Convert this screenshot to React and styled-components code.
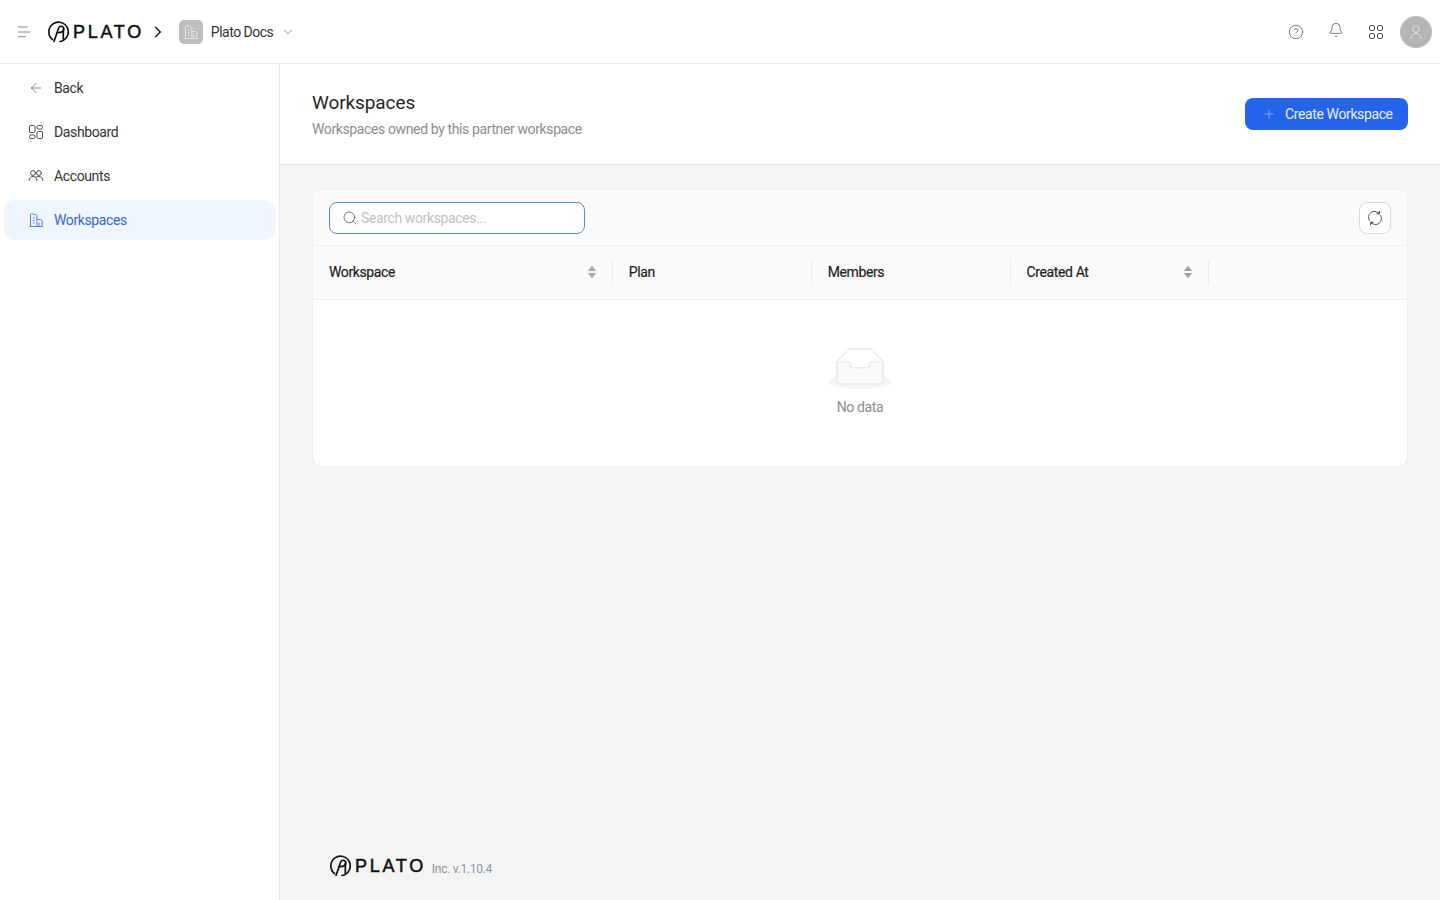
import React from 'react';
import styled, { createGlobalStyle } from 'styled-components';
import { ArrowLeft, Bell, ChevronDown, ChevronRight, CircleHelp, Plus, Search } from 'lucide-react';

const GlobalStyle = createGlobalStyle`
	html, body {
		margin: 0;
		padding: 0;
		height: 100%;
	}
	body {
		font-family: Roboto, "Noto Sans", sans-serif;
		font-size: 14px;
		letter-spacing: -0.38px;
		color: #262626;
		background: #fff;
	}
	* {
		box-sizing: border-box;
	}
`;

const Page = styled.div`
	width: 1440px;
	height: 900px;
	display: flex;
	flex-direction: column;
	overflow: hidden;
`;

const TopBar = styled.header`
	height: 64px;
	flex: none;
	display: flex;
	align-items: center;
	justify-content: space-between;
	padding: 0 8px 0 16px;
	background: #fff;
	border-bottom: 1px solid #e8e9ea;
`;

const TopLeft = styled.div`
	display: flex;
	align-items: center;
`;

const TopRight = styled.div`
	display: flex;
	align-items: center;
`;

const MenuButton = styled.span`
	display: flex;
	width: 16px;
	margin-right: 15px;
	color: #888;
`;

const LogoWrap = styled.div`
	display: flex;
	align-items: center;
	gap: 4px;
`;

const LogoWord = styled.span`
	font-family: "Liberation Sans", Arial, sans-serif;
	font-size: 18px;
	font-weight: 400;
	line-height: 1;
	letter-spacing: 2.7px;
	color: #111;
	-webkit-text-stroke: 0.5px #111;
`;

const Crumb = styled.span`
	display: flex;
	margin: 0 12px 0 5px;
	color: #222;
`;

const WorkspaceBadge = styled.span`
	width: 24px;
	height: 24px;
	border-radius: 5px;
	background: #bdbdbd;
	display: flex;
	align-items: center;
	justify-content: center;
	color: #e6e6e6;
	margin-right: 8px;
`;

const WorkspaceName = styled.span`
	font-size: 14px;
	letter-spacing: -0.5px;
	color: #333;
	margin-right: 8px;
`;

const TopIcon = styled.span`
	display: flex;
	justify-content: center;
	width: 40px;
	margin-top: ${(p) => p.$up || 0}px;
	color: #4d4d4d;
`;

const Avatar = styled.span`
	width: 32px;
	height: 32px;
	border-radius: 50%;
	background: #b5b5b5;
	display: flex;
	align-items: center;
	justify-content: center;
	color: #e4e4e4;
	margin-left: 4px;
`;

const Body = styled.div`
	flex: 1;
	display: flex;
	min-height: 0;
`;

const Sidebar = styled.nav`
	width: 280px;
	flex: none;
	padding: 4px 4px 0;
	background: #fff;
	border-right: 1px solid #e8e9ea;
	display: flex;
	flex-direction: column;
	gap: 4px;
`;

const NavItem = styled.div`
	width: 271px;
	height: 40px;
	display: flex;
	align-items: center;
	gap: 10px;
	padding-left: 24px;
	border-radius: 10px;
	font-size: 14px;
	background: ${(p) => (p.$active ? '#eff6ff' : 'transparent')};
	color: ${(p) => (p.$active ? '#3a66c4' : '#333')};
	svg {
		flex: none;
		color: ${(p) => (p.$active ? '#5a80d0' : '#4d4d4d')};
	}
`;

const Main = styled.main`
	flex: 1;
	min-width: 0;
	display: flex;
	flex-direction: column;
	background: #f4f4f5;
`;

const PageHeader = styled.div`
	height: 101px;
	flex: none;
	display: flex;
	align-items: flex-start;
	justify-content: space-between;
	padding: 25px 32px 0;
	background: #fff;
	border-bottom: 1px solid #e3e4e6;
`;

const Title = styled.h1`
	margin: 0;
	font-size: 19px;
	line-height: 28px;
	font-weight: 400;
	letter-spacing: -0.1px;
	color: #262626;
`;

const Subtitle = styled.p`
	margin: 2px 0 0;
	font-size: 14px;
	line-height: 20px;
	color: #8c8c8c;
`;

const PrimaryButton = styled.button`
	margin-top: 9px;
	width: 163px;
	height: 32px;
	display: flex;
	align-items: center;
	gap: 9px;
	padding: 0 0 0 17px;
	border: 0;
	border-radius: 8px;
	background: #2563eb;
	color: #e6efff;
	font: inherit;
	letter-spacing: inherit;
	font-size: 14px;
	svg {
		color: #a5c2f8;
	}
`;

const Content = styled.div`
	flex: 1;
	display: flex;
	flex-direction: column;
	justify-content: space-between;
	padding: 24px 32px 23px;
	min-height: 0;
`;

const Card = styled.section`
	height: 278px;
	background: #fff;
	border: 1px solid #eeeff0;
	border-radius: 10px;
	overflow: hidden;
`;

const Toolbar = styled.div`
	height: 56px;
	display: flex;
	align-items: center;
	justify-content: space-between;
	padding: 0 16px;
	background: #fafafa;
	border-bottom: 1px solid #f0f0f0;
`;

const SearchBox = styled.label`
	width: 256px;
	height: 32px;
	display: flex;
	align-items: center;
	gap: 2px;
	padding-left: 12px;
	background: #fff;
	border: 1px solid #5b8ac9;
	border-radius: 8px;
	color: #444;
`;

const SearchInput = styled.input`
	flex: 1;
	min-width: 0;
	padding: 0 0 0 1px;
	border: 0;
	outline: 0;
	background: transparent;
	font: inherit;
	letter-spacing: inherit;
	font-size: 14px;
	&::placeholder {
		color: #bfbfbf;
	}
`;

const IconButton = styled.button`
	width: 32px;
	height: 32px;
	padding: 0;
	display: flex;
	align-items: center;
	justify-content: center;
	background: #fff;
	border: 1px solid #d9d9d9;
	border-radius: 8px;
	color: #555;
`;

const HeadRow = styled.div`
	height: 54px;
	display: grid;
	grid-template-columns: 299.8px 198.9px 198.9px 198.4px 1fr;
	align-items: center;
	background: #fafafa;
	border-bottom: 1px solid #f0f0f0;
`;

const HeadCell = styled.div`
	position: relative;
	height: 100%;
	display: flex;
	align-items: center;
	justify-content: space-between;
	padding: 0 16px 1px;
	color: #1f1f1f;
	-webkit-text-stroke: 0.2px #1f1f1f;
	&::after {
		content: ${(p) => (p.$last ? 'none' : "''")};
		position: absolute;
		top: 14px;
		right: 0;
		bottom: 14px;
		width: 1px;
		background: #ececec;
	}
`;

const EmptyState = styled.div`
	display: flex;
	flex-direction: column;
	align-items: center;
	padding-top: 48px;
`;

const EmptyText = styled.div`
	margin-top: 8px;
	line-height: 20px;
	color: #8c8c8c;
`;

const Footer = styled.footer`
	display: flex;
	align-items: center;
	gap: 6px;
	padding-left: 17px;
`;

const Version = styled.span`
	font-size: 12px;
	letter-spacing: -0.3px;
	color: #8b93a7;
	margin-top: 6px;
`;

function HamburgerIcon() {
	return (
		<svg width="16" height="16" viewBox="0 0 16 16" fill="none" stroke="currentColor" strokeLinecap="round">
			<path d="M2.5 3h9M2.5 8h11.500M2.500 12.700h7" />
		</svg>
	);
}

function LogoMark({ size }) {
	return (
		<svg width={size} height={size} viewBox="0 0 22 22" fill="none" stroke="#111" strokeWidth="1.700" strokeLinecap="round">
			<path d="M5.500 18.500A9.700 9.700 0 1 1 13 20.500" />
			<path d="M7 20.500 11.500 7.500c.7-1.900 2.300-2.700 3.900-2 1.900.9 2 3.800.2 5-1.500 1-3.700 1.300-5.800 1.100" />
			<path d="M16.300 8v10" />
		</svg>
	);
}

function Logo({ size = 22 }) {
	return (
		<LogoWrap>
			<LogoMark size={size} />
			<LogoWord>PLATO</LogoWord>
		</LogoWrap>
	);
}

function BuildingIcon({ size = 16 }) {
	return (
		<svg width={size} height={size} viewBox="0 0 16 16" fill="none" stroke="currentColor" strokeWidth="1" strokeLinejoin="round">
			<path d="M1.500 14.500h13" />
			<path d="M2.500 14.500V2.600c0-.6.5-1 1.100-.9l4.400 1c.5.1.9.5.9 1v10.800" />
			<path d="M8.900 7.500h3.600c1 0 1.600.6 1.600 1.600v5.400" />
			<path d="M4.800 6h1.800M4.800 8.500h1.800M4.800 11h1.800M11 10.500v4" />
		</svg>
	);
}

function DashboardIcon() {
	return (
		<svg width="16" height="16" viewBox="0 0 16 16" fill="none" stroke="currentColor" strokeWidth="1">
			<rect x="1.500" y="1.500" width="5.500" height="7" rx="1.500" />
			<rect x="1.500" y="11" width="5.500" height="3.500" rx="1.500" />
			<rect x="9" y="1.500" width="5.500" height="3.500" rx="1.500" />
			<rect x="9" y="7.500" width="5.500" height="7" rx="1.500" />
		</svg>
	);
}

function AccountsIcon() {
	return (
		<svg width="16" height="16" viewBox="0 0 16 16" fill="none" stroke="currentColor" strokeWidth="1" strokeLinecap="round">
			<circle cx="5" cy="5" r="2.400" />
			<circle cx="11" cy="5" r="2.400" />
			<path d="M1 12.500c.4-2.600 1.900-4 4-4s3.600 1.400 4 4" />
			<path d="M7.800 9c.8-.4 1.900-.6 3.200-.5 2.100.1 3.600 1.500 4 4" />
		</svg>
	);
}

function AppsIcon() {
	return (
		<svg width="16" height="16" viewBox="0 0 16 16" fill="none" stroke="currentColor" strokeWidth="1">
			<rect x="1.500" y="1.500" width="5" height="5" rx="1.400" />
			<rect x="9.500" y="1.500" width="5" height="5" rx="1.400" />
			<rect x="1.500" y="9.500" width="5" height="5" rx="1.400" />
			<rect x="9.500" y="9.500" width="5" height="5" rx="1.400" />
		</svg>
	);
}

function UserIcon() {
	return (
		<svg width="16" height="16" viewBox="0 0 16 16" fill="none" stroke="currentColor" strokeWidth="1" strokeLinecap="round">
			<circle cx="8" cy="5" r="3.400" />
			<path d="M2.800 14.500c.3-3 2.300-5 5.200-5s4.900 2 5.200 5" />
		</svg>
	);
}

function RefreshIcon() {
	return (
		<svg width="16" height="16" viewBox="0 0 16 16" fill="none" stroke="currentColor" strokeWidth="1" strokeLinecap="round">
			<path d="M2.300 10.500A6 6 0 0 1 11.800 3.300" />
			<path d="M13.700 5.500A6 6 0 0 1 4.200 12.700" />
			<path d="M12.500 1.300v2.500H10" fill="currentColor" />
			<path d="M3.500 14.700v-2.500H6" fill="currentColor" />
		</svg>
	);
}

function SortIcon() {
	return (
		<svg width="10" height="14" viewBox="0 0 10 14" fill="#a6a6a6">
			<path d="M5 .8 9.200 6H.8z" />
			<path d="M5 13.200.8 8h8.400z" />
		</svg>
	);
}

function EmptyIcon() {
	return (
		<svg width="64" height="41" viewBox="0 0 64 41">
			<g transform="translate(0 1)" fill="none" fillRule="evenodd">
				<ellipse fill="#f5f5f5" cx="32" cy="33" rx="32" ry="7" />
				<g fillRule="nonzero" stroke="#e3e3e3">
					<path d="M55 12.76L44.854 1.258C44.367.474 43.656 0 42.907 0H21.093c-.749 0-1.46.474-1.947 1.257L9 12.761V22h46v-9.24z" />
					<path
						d="M41.613 15.931c0-1.605.994-2.93 2.227-2.931H55v18.137C55 33.26 53.68 35 52.05 35h-40.100C10.320 35 9 33.259 9 31.137V13h11.160c1.233 0 2.227 1.323 2.227 2.928v.022c0 1.605 1.005 2.901 2.237 2.901h14.752c1.232 0 2.237-1.308 2.237-2.913v-.007z"
						fill="#fafafa"
					/>
				</g>
			</g>
		</svg>
	);
}

const navItems = [
	{ label: 'Back', icon: <ArrowLeft size={16} strokeWidth={1} /> },
	{ label: 'Dashboard', icon: <DashboardIcon /> },
	{ label: 'Accounts', icon: <AccountsIcon /> },
	{ label: 'Workspaces', icon: <BuildingIcon />, active: true },
];

const columns = [
	{ label: 'Workspace', sortable: true },
	{ label: 'Plan' },
	{ label: 'Members' },
	{ label: 'Created At', sortable: true },
];

function App() {
	return (
		<Page>
			<GlobalStyle />
			<TopBar>
				<TopLeft>
					<MenuButton>
						<HamburgerIcon />
					</MenuButton>
					<Logo />
					<Crumb>
						<ChevronRight size={18} strokeWidth={2.2} />
					</Crumb>
					<WorkspaceBadge>
						<BuildingIcon />
					</WorkspaceBadge>
					<WorkspaceName>Plato Docs</WorkspaceName>
					<ChevronDown size={14} strokeWidth={1} color="#444" />
				</TopLeft>
				<TopRight>
					<TopIcon>
						<CircleHelp size={16} strokeWidth={1.1} />
					</TopIcon>
					<TopIcon $up={-4}>
						<Bell size={16} strokeWidth={1.1} />
					</TopIcon>
					<TopIcon>
						<AppsIcon />
					</TopIcon>
					<Avatar>
						<UserIcon />
					</Avatar>
				</TopRight>
			</TopBar>
			<Body>
				<Sidebar>
					{navItems.map((item) => (
						<NavItem key={item.label} $active={item.active}>
							{item.icon}
							{item.label}
						</NavItem>
					))}
				</Sidebar>
				<Main>
					<PageHeader>
						<div>
							<Title>Workspaces</Title>
							<Subtitle>Workspaces owned by this partner workspace</Subtitle>
						</div>
						<PrimaryButton>
							<Plus size={14} strokeWidth={1.2} />
							Create Workspace
						</PrimaryButton>
					</PageHeader>
					<Content>
						<Card>
							<Toolbar>
								<SearchBox>
									<Search size={16} strokeWidth={1.1} />
									<SearchInput placeholder="Search workspaces..." />
								</SearchBox>
								<IconButton>
									<RefreshIcon />
								</IconButton>
							</Toolbar>
							<HeadRow>
								{columns.map((col) => (
									<HeadCell key={col.label}>
										{col.label}
										{col.sortable && <SortIcon />}
									</HeadCell>
								))}
								<HeadCell $last />
							</HeadRow>
							<EmptyState>
								<EmptyIcon />
								<EmptyText>No data</EmptyText>
							</EmptyState>
						</Card>
						<Footer>
							<Logo />
							<Version>Inc. v.1.10.4</Version>
						</Footer>
					</Content>
				</Main>
			</Body>
		</Page>
	);
}

export default App;
